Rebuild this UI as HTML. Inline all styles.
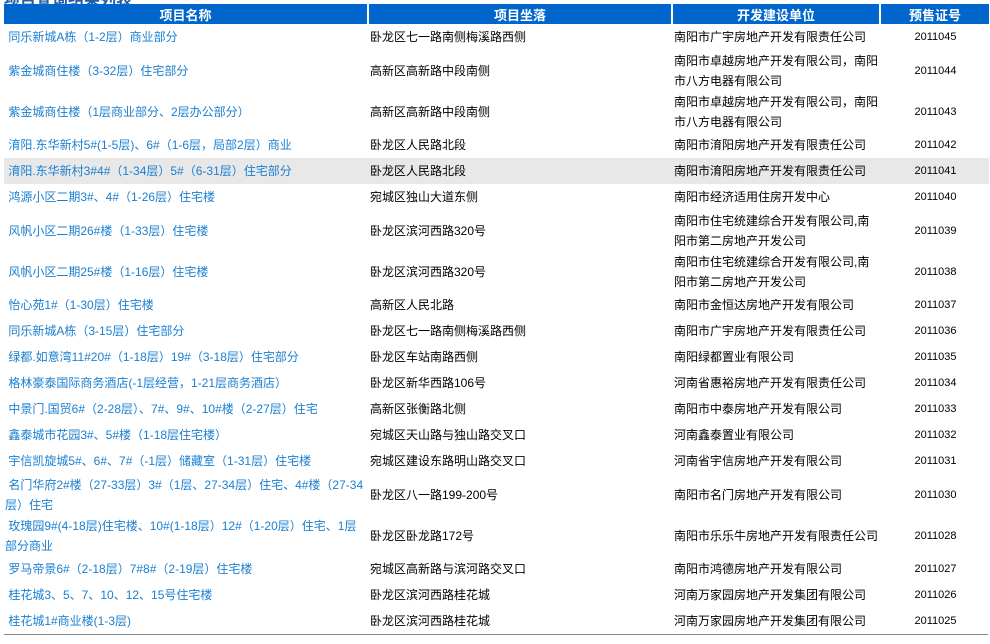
<!DOCTYPE html>
<html><head><meta charset="utf-8">
<style>
html,body{margin:0;padding:0;background:#fff;width:990px;height:644px;overflow:hidden;}
body{font-family:"Liberation Sans","Noto Sans CJK SC","WenQuanYi Zen Hei",sans-serif;font-size:12px;color:#000;position:relative;}
.tt{position:absolute;left:4px;top:-14px;font-size:16px;font-weight:bold;color:#1d5fa8;}
table{position:absolute;left:4px;top:4px;border-collapse:collapse;table-layout:fixed;width:985px;}
th{background:#0066cc;color:#fff;font-weight:bold;height:20px;padding:0;font-size:13px;border-right:2px solid #fff;text-align:center;}
th:last-child{border-right:0}
td{padding:0 0 0 2px;line-height:20px;vertical-align:middle;}
tr.s td{height:26px}
tr.d td{height:41px}
td.n{color:#1a7fd0;padding-left:1px;}
td.c{text-align:center;font-size:11px;font-family:"Liberation Sans",sans-serif;}
tr.h td{background:#e8e8e8}
.bl{position:absolute;left:4px;top:634px;width:984px;height:1px;background:#888;}
</style></head><body>
<div class="tt">项目查询结果列表</div>
<table>
<colgroup><col style="width:364px"><col style="width:304px"><col style="width:208px"><col style="width:109px"></colgroup>
<tr><th>项目名称</th><th>项目坐落</th><th>开发建设单位</th><th>预售证号</th></tr>
<tr class="s"><td class="n">&nbsp;同乐新城A栋（1-2层）商业部分</td><td>卧龙区七一路南侧梅溪路西侧</td><td>南阳市广宇房地产开发有限责任公司</td><td class="c">2011045</td></tr>
<tr class="d"><td class="n">&nbsp;紫金城商住楼（3-32层）住宅部分</td><td>高新区高新路中段南侧</td><td>南阳市卓越房地产开发有限公司，南阳市八方电器有限公司</td><td class="c">2011044</td></tr>
<tr class="d"><td class="n">&nbsp;紫金城商住楼（1层商业部分、2层办公部分）</td><td>高新区高新路中段南侧</td><td>南阳市卓越房地产开发有限公司，南阳市八方电器有限公司</td><td class="c">2011043</td></tr>
<tr class="s"><td class="n">&nbsp;淯阳.东华新村5#(1-5层)、6#（1-6层，局部2层）商业</td><td>卧龙区人民路北段</td><td>南阳市淯阳房地产开发有限责任公司</td><td class="c">2011042</td></tr>
<tr class="s h"><td class="n">&nbsp;淯阳.东华新村3#4#（1-34层）5#（6-31层）住宅部分</td><td>卧龙区人民路北段</td><td>南阳市淯阳房地产开发有限责任公司</td><td class="c">2011041</td></tr>
<tr class="s"><td class="n">&nbsp;鸿源小区二期3#、4#（1-26层）住宅楼</td><td>宛城区独山大道东侧</td><td>南阳市经济适用住房开发中心</td><td class="c">2011040</td></tr>
<tr class="d"><td class="n">&nbsp;风帆小区二期26#楼（1-33层）住宅楼</td><td>卧龙区滨河西路320号</td><td>南阳市住宅统建综合开发有限公司,南阳市第二房地产开发公司</td><td class="c">2011039</td></tr>
<tr class="d"><td class="n">&nbsp;风帆小区二期25#楼（1-16层）住宅楼</td><td>卧龙区滨河西路320号</td><td>南阳市住宅统建综合开发有限公司,南阳市第二房地产开发公司</td><td class="c">2011038</td></tr>
<tr class="s"><td class="n">&nbsp;怡心苑1#（1-30层）住宅楼</td><td>高新区人民北路</td><td>南阳市金恒达房地产开发有限公司</td><td class="c">2011037</td></tr>
<tr class="s"><td class="n">&nbsp;同乐新城A栋（3-15层）住宅部分</td><td>卧龙区七一路南侧梅溪路西侧</td><td>南阳市广宇房地产开发有限责任公司</td><td class="c">2011036</td></tr>
<tr class="s"><td class="n">&nbsp;绿都.如意湾11#20#（1-18层）19#（3-18层）住宅部分</td><td>卧龙区车站南路西侧</td><td>南阳绿都置业有限公司</td><td class="c">2011035</td></tr>
<tr class="s"><td class="n">&nbsp;格林豪泰国际商务酒店(-1层经营，1-21层商务酒店）</td><td>卧龙区新华西路106号</td><td>河南省惠裕房地产开发有限责任公司</td><td class="c">2011034</td></tr>
<tr class="s"><td class="n">&nbsp;中景门.国贸6#（2-28层）、7#、9#、10#楼（2-27层）住宅</td><td>高新区张衡路北侧</td><td>南阳市中泰房地产开发有限公司</td><td class="c">2011033</td></tr>
<tr class="s"><td class="n">&nbsp;鑫泰城市花园3#、5#楼（1-18层住宅楼）</td><td>宛城区天山路与独山路交叉口</td><td>河南鑫泰置业有限公司</td><td class="c">2011032</td></tr>
<tr class="s"><td class="n">&nbsp;宇信凯旋城5#、6#、7#（-1层）储藏室（1-31层）住宅楼</td><td>宛城区建设东路明山路交叉口</td><td>河南省宇信房地产开发有限公司</td><td class="c">2011031</td></tr>
<tr class="d"><td class="n">&nbsp;名门华府2#楼（27-33层）3#（1层、27-34层）住宅、4#楼（27-34层）住宅</td><td>卧龙区八一路199-200号</td><td>南阳市名门房地产开发有限公司</td><td class="c">2011030</td></tr>
<tr class="d"><td class="n">&nbsp;玫瑰园9#(4-18层)住宅楼、10#(1-18层）12#（1-20层）住宅、1层部分商业</td><td>卧龙区卧龙路172号</td><td>南阳市乐乐牛房地产开发有限责任公司</td><td class="c">2011028</td></tr>
<tr class="s"><td class="n">&nbsp;罗马帝景6#（2-18层）7#8#（2-19层）住宅楼</td><td>宛城区高新路与滨河路交叉口</td><td>南阳市鸿德房地产开发有限公司</td><td class="c">2011027</td></tr>
<tr class="s"><td class="n">&nbsp;桂花城3、5、7、10、12、15号住宅楼</td><td>卧龙区滨河西路桂花城</td><td>河南万家园房地产开发集团有限公司</td><td class="c">2011026</td></tr>
<tr class="s"><td class="n">&nbsp;桂花城1#商业楼(1-3层)</td><td>卧龙区滨河西路桂花城</td><td>河南万家园房地产开发集团有限公司</td><td class="c">2011025</td></tr>
</table>
<div class="bl"></div>
</body></html>
